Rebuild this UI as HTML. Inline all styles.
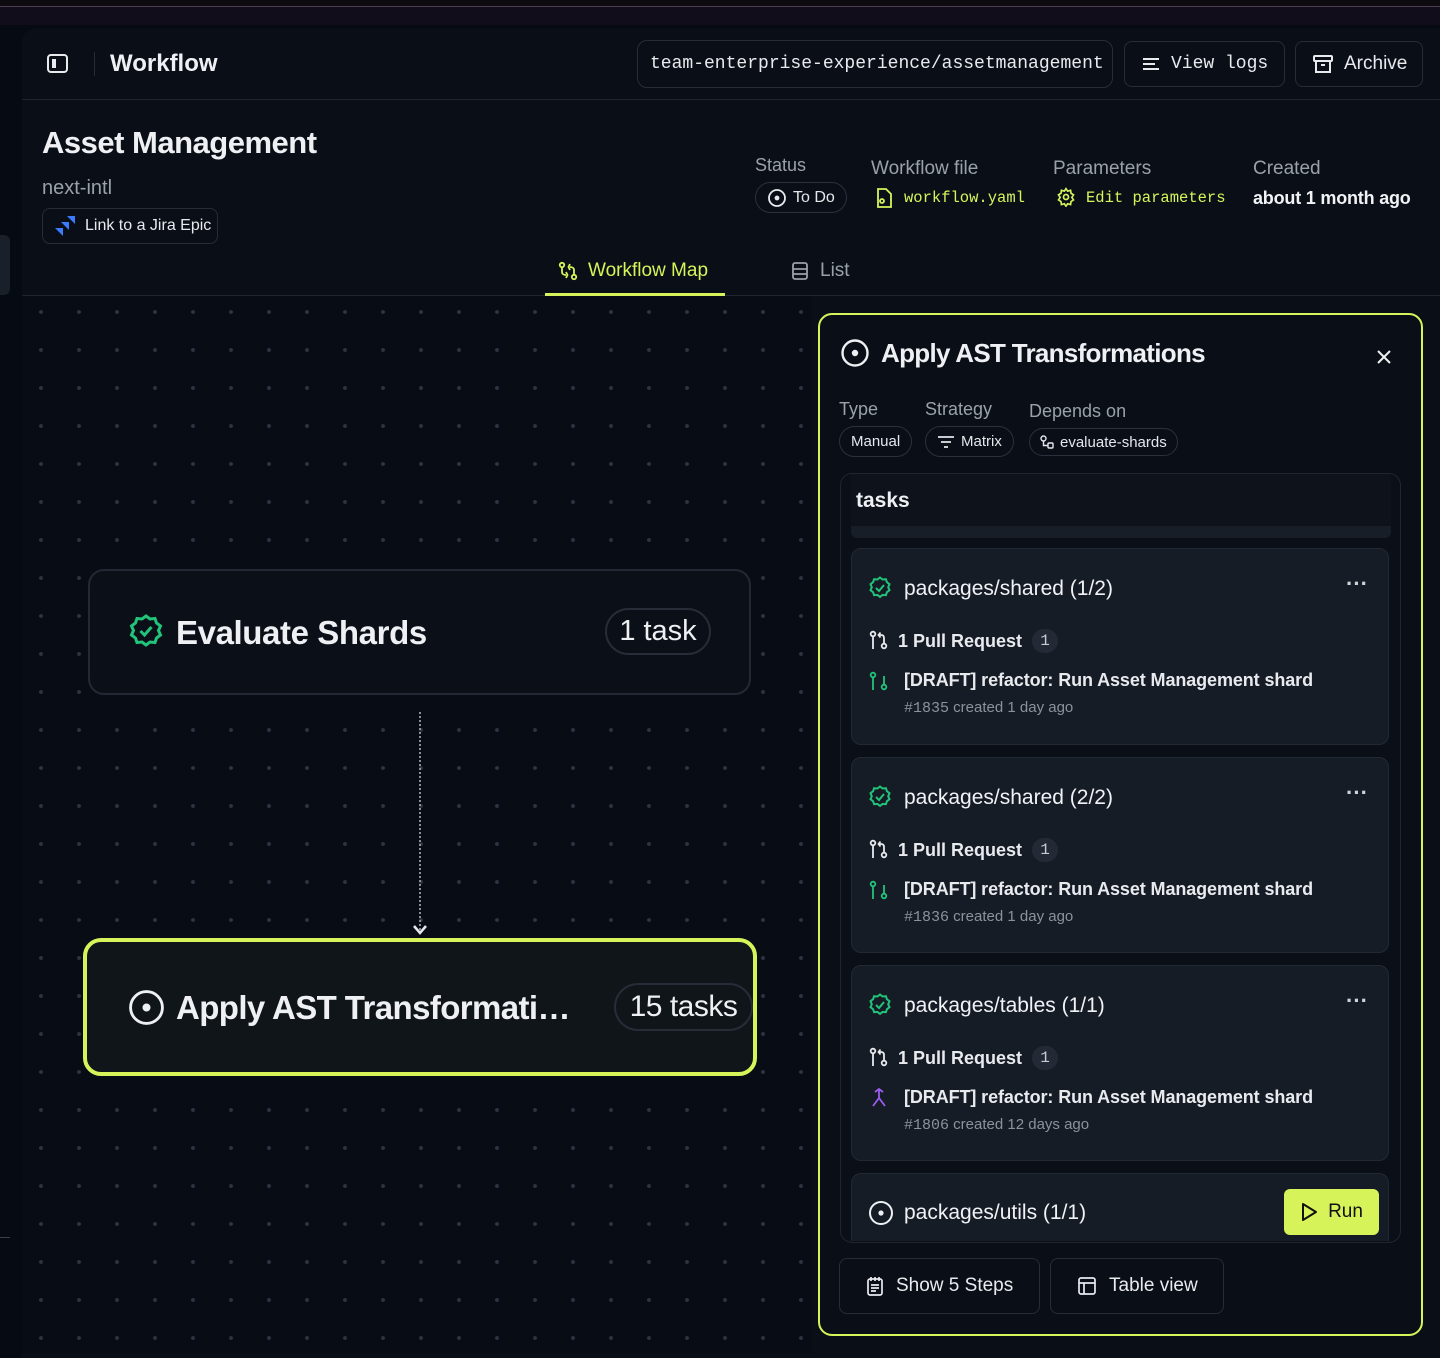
<!DOCTYPE html>
<html><head><meta charset="utf-8"><style>
*{box-sizing:border-box;margin:0;padding:0}
body{width:1440px;height:1353px;background:#060b13;font-family:"Liberation Sans",sans-serif;color:#eef0f3;position:relative;overflow:hidden}
.a{position:absolute}
.mono{font-family:"Liberation Mono",monospace}
.btn{position:absolute;border:1px solid #262d38;border-radius:8px;display:flex;align-items:center;gap:10px;color:#e8eaee}
.lbl{color:#9aa1ab;font-size:18px}
.pill{position:absolute;border:1px solid #2a313c;border-radius:16px;display:flex;align-items:center;gap:6px;font-size:15px;color:#e4e7eb;padding:0 10px}
.card{position:absolute;left:851px;width:538px;background:#161c25;border:1px solid #222935;border-radius:10px}
.ct{position:absolute;left:52px;top:28px;font-size:21px;color:#f0f2f5}
.pr{position:absolute;left:16px;top:80px;display:flex;align-items:center;gap:8px;font-size:18px;font-weight:bold;color:#e8eaee}
.badge{display:inline-block;background:#232a35;border-radius:12px;width:26px;height:24px;text-align:center;line-height:24px;font-family:"Liberation Mono",monospace;font-size:16px;font-weight:normal;color:#c8ccd2;margin-left:2px}
.prt{position:absolute;left:52px;top:121px;font-size:18px;font-weight:bold;color:#e8eaee;letter-spacing:-0.1px}
.prs{position:absolute;left:52px;top:150px;font-size:15px;color:#8b929c}
.dots{position:absolute;left:494px;top:22px;font-size:22px;font-weight:bold;color:#cfd3d8;letter-spacing:0px}
</style></head><body>
<div class="a" style="left:0;top:0;width:1440px;height:6px;background:#0d0a10"></div>
<div class="a" style="left:0;top:6px;width:1440px;height:1px;background:#4a3f52"></div>
<div class="a" style="left:0;top:7px;width:1440px;height:18px;background:#120d1a"></div>
<div class="a" style="left:0;top:235px;width:10px;height:60px;background:#1a2029;border-radius:0 6px 6px 0"></div>
<div class="a" style="left:0;top:1237px;width:10px;height:1px;background:#3a404a"></div>
<div class="a" style="left:22px;top:28px;width:1418px;height:1330px;background:#0a0f17;border-radius:14px 0 0 0"></div>
<div class="a" style="left:22px;top:296px;width:790px;height:1057px;background-color:#070c15;background-image:radial-gradient(circle,#2c3340 1.8px,transparent 2.2px);background-size:38px 38px;background-position:0px -3px"></div>
<div class="a" style="left:22px;top:99px;width:1418px;height:1px;background:#1d2530"></div>
<svg class="a" style="left:46px;top:52px" width="24" height="24" viewBox="0 0 24 24" fill="none" stroke="#e8eaee" stroke-width="2"><rect x="2" y="3" width="19" height="17" rx="3"/><rect x="6" y="7" width="4" height="9" fill="#e8eaee" stroke="none"/></svg>
<div class="a" style="left:94px;top:52px;width:1px;height:24px;background:#262d38"></div>
<div class="a" style="left:110px;top:50px;font-size:24px;font-weight:bold">Workflow</div>
<div class="btn mono" style="left:637px;top:40px;width:476px;height:48px;padding-left:12px;font-size:18px;border-radius:10px">team-enterprise-experience/assetmanagement</div>
<div class="btn mono" style="left:1124px;top:41px;width:161px;height:46px;padding-left:16px;font-size:18px"><svg width="20" height="20" viewBox="0 0 20 20" stroke="#e8eaee" stroke-width="2" fill="none"><path d="M2 5h16M2 10h12M2 15h16"/></svg>View logs</div>
<div class="btn" style="left:1295px;top:41px;width:128px;height:46px;padding-left:16px;font-size:19px"><svg width="22" height="22" viewBox="0 0 22 22" stroke="#e8eaee" stroke-width="2" fill="none"><rect x="2" y="3" width="18" height="5" rx="1"/><path d="M4 8v11h14V8M9 12h4"/></svg>Archive</div>
<div class="a" style="left:42px;top:125px;font-size:31px;font-weight:bold;letter-spacing:-0.5px">Asset Management</div>
<div class="a" style="left:42px;top:177px;font-size:20px;color:#9aa1ab">next-intl</div>
<div class="btn" style="left:42px;top:208px;width:176px;height:36px;padding-left:10px;font-size:16px;gap:8px"><svg width="24" height="24" viewBox="0 0 24 24"><path d="M14 2l8 0 0 8-8-8zM8 8l8 0 0 8zM2 14l8 0 0 8z" fill="#3b7bff"/></svg>Link to a Jira Epic</div>
<div class="a lbl" style="left:755px;top:155px">Status</div>
<div class="pill" style="left:755px;top:182px;height:31px;font-size:16px;gap:6px;padding:0 11px"><svg width="20" height="20" viewBox="0 0 20 20" fill="none" stroke="#e8eaee" stroke-width="1.8"><circle cx="10" cy="10" r="8"/><circle cx="10" cy="10" r="1.5" fill="#e8eaee"/></svg>To Do</div>
<div class="a lbl" style="left:871px;top:158px;font-size:19px">Workflow file</div>
<svg class="a" style="left:874px;top:187px" width="20" height="22" viewBox="0 0 20 22" fill="none" stroke="#d6f45a" stroke-width="1.8"><path d="M4 2h8l5 5v13H4z"/><circle cx="8" cy="14" r="2"/></svg>
<div class="a mono" style="left:904px;top:189px;font-size:15.5px;color:#d6f45a">workflow.yaml</div>
<div class="a lbl" style="left:1053px;top:158px;font-size:19px">Parameters</div>
<svg class="a" style="left:1056px;top:187px" width="20" height="20" viewBox="0 0 24 24" fill="none" stroke="#d6f45a" stroke-width="2"><circle cx="12" cy="12" r="3"/><path d="M12 2l2 3 3.5-1 .5 3.5 3 2-2 3 2 3-3 2-.5 3.5-3.5-1-2 3-2-3-3.5 1-.5-3.5-3-2 2-3-2-3 3-2 .5-3.5 3.5 1z"/></svg>
<div class="a mono" style="left:1086px;top:189px;font-size:15.5px;color:#d6f45a">Edit parameters</div>
<div class="a lbl" style="left:1253px;top:158px;font-size:19px">Created</div>
<div class="a" style="left:1253px;top:188px;font-size:18px;font-weight:bold;color:#f0f2f5;letter-spacing:-0.2px">about 1 month ago</div>
<div class="a" style="left:22px;top:295px;width:1418px;height:1px;background:#1d2530"></div>
<div class="a" style="left:545px;top:293px;width:180px;height:3px;background:#d6f45a"></div>
<svg class="a" style="left:558px;top:261px" width="20" height="20" viewBox="0 0 20 20" fill="none" stroke="#d6f45a" stroke-width="1.8"><circle cx="4" cy="4" r="2.2"/><circle cx="16" cy="16" r="2.2"/><path d="M4 6v5c0 2 2 3 4 3M16 14V9c0-2-2-3-4-3M12 3l-1.5 3 1.5 3M8 11l1.5 3L8 17"/></svg>
<div class="a" style="left:588px;top:260px;font-size:19px;color:#d6f45a">Workflow Map</div>
<svg class="a" style="left:790px;top:261px" width="20" height="20" viewBox="0 0 20 20" fill="none" stroke="#9aa1ab" stroke-width="1.8"><rect x="3" y="2" width="14" height="16" rx="2"/><path d="M3 8h14M3 13h14"/></svg>
<div class="a" style="left:820px;top:260px;font-size:19px;color:#9aa1ab">List</div>
<div class="a" style="left:88px;top:569px;width:663px;height:126px;background:#0b1018;border:2px solid #222935;border-radius:16px"></div>
<svg class="a" style="left:128px;top:613px" width="36" height="36" viewBox="0 0 36 36" fill="none" stroke="#21c47a" stroke-width="3"><path d="M18 3l4 3 5-.5 1.5 4.5 4 3-2 4.5 2 4.5-4 3-1.5 4.5-5-.5-4 3-4-3-5 .5-1.5-4.5-4-3 2-4.5-2-4.5 4-3L9 5.5l5 .5z"/><path d="M12.5 18l4 4 7-8"/></svg>
<div class="a" style="left:176px;top:614px;font-size:33px;font-weight:bold;letter-spacing:-0.4px">Evaluate Shards</div>
<div class="a" style="left:605px;top:608px;width:106px;height:47px;border:2px solid #262d38;border-radius:24px;font-size:29px;text-align:center;line-height:43px">1 task</div>
<div class="a" style="left:419px;top:712px;height:218px;border-left:2px dotted #8a9099"></div>
<svg class="a" style="left:411px;top:924px" width="18" height="12" viewBox="0 0 18 12" fill="none" stroke="#e8eaee" stroke-width="2.5"><path d="M3 2l6 7 6-7"/></svg>
<div class="a" style="left:83px;top:938px;width:674px;height:138px;background:#0f1519;border:4px solid #d6f45a;border-radius:18px"></div>
<svg class="a" style="left:128px;top:989px" width="37" height="37" viewBox="0 0 36 36" fill="none" stroke="#eef0f3" stroke-width="2.8"><circle cx="18" cy="18" r="15.5"/><circle cx="18" cy="18" r="2.5" fill="#eef0f3"/></svg>
<div class="a" style="left:176px;top:989px;font-size:33px;font-weight:bold;letter-spacing:-0.6px">Apply AST Transformati…</div>
<div class="a" style="left:614px;top:983px;width:139px;height:48px;border:2px solid #262d38;border-radius:24px;font-size:30px;text-align:center;line-height:44px;letter-spacing:-0.5px">15 tasks</div>
<div class="a" style="left:818px;top:313px;width:605px;height:1023px;background:#0a0f17;border:2px solid #d6f45a;border-radius:14px"></div>
<svg class="a" style="left:840px;top:338px" width="30" height="30" viewBox="0 0 30 30" fill="none" stroke="#eef0f3" stroke-width="2.4"><circle cx="15" cy="15" r="12.5"/><circle cx="15" cy="15" r="2" fill="#eef0f3"/></svg>
<div class="a" style="left:881px;top:338px;font-size:26px;font-weight:bold;letter-spacing:-0.7px">Apply AST Transformations</div>
<svg class="a" style="left:1376px;top:349px" width="16" height="16" viewBox="0 0 16 16" stroke="#eef0f3" stroke-width="2"><path d="M2 2l12 12M14 2L2 14"/></svg>
<div class="a lbl" style="left:839px;top:399px">Type</div>
<div class="a lbl" style="left:925px;top:399px">Strategy</div>
<div class="a lbl" style="left:1029px;top:401px">Depends on</div>
<div class="pill" style="left:839px;top:426px;height:31px;padding:0 11px">Manual</div>
<div class="pill" style="left:925px;top:426px;height:31px;padding:0 11px"><svg width="18" height="14" viewBox="0 0 18 14" stroke="#e4e7eb" stroke-width="1.8"><path d="M1 2h16M4 7h10M7 12h4"/></svg>Matrix</div>
<div class="pill" style="left:1029px;top:428px;height:28px;padding:0 10px"><svg width="14" height="14" viewBox="0 0 14 14" fill="none" stroke="#e4e7eb" stroke-width="1.4"><rect x="1" y="1" width="5" height="5" rx="2.5"/><rect x="8" y="8" width="5" height="5" rx="1"/><path d="M3.5 6v4.5H8"/></svg>evaluate-shards</div>
<div class="a" style="left:840px;top:473px;width:561px;height:770px;border:1px solid #1f2630;border-radius:12px;background:#0b1018;overflow:hidden">
<div class="a" style="left:10px;top:0;width:540px;height:52px;background:#0e131b"></div>
<div class="a" style="left:10px;top:52px;width:540px;height:12px;background:#181e28;border-radius:0 0 6px 6px"></div>
</div>
<div class="a" style="left:856px;top:489px;font-size:21px;font-weight:bold">tasks</div>
<svg width="0" height="0" style="position:absolute"><defs>
<g id="chk" fill="none" stroke="#21c47a" stroke-width="2"><path d="M12 1.5l2.6 2 3.3-.3 1 3 2.6 2-1.3 3 1.3 3-2.6 2-1 3-3.3-.3-2.6 2-2.6-2-3.3.3-1-3-2.6-2 1.3-3-1.3-3 2.6-2 1-3 3.3.3z"/><path d="M8 12l3 3 5-6"/></g>
<g id="prw" fill="none" stroke="#e8eaee" stroke-width="1.8"><circle cx="4" cy="4" r="2.3"/><circle cx="15" cy="16" r="2.3"/><path d="M4 6.3V19M15 13.7V8c0-2-1-3-3-3H10M11.5 2.5L9.5 5l2 2.5"/></g>
<g id="prg" fill="none" stroke="#21c47a" stroke-width="1.8"><circle cx="4" cy="4" r="2.3"/><circle cx="15" cy="16" r="2.3"/><path d="M4 6.3V19M15 13.7V5"/></g>
</defs></svg>
<div class="card" style="top:548px;height:197px">
<svg class="a" style="left:16px;top:27px" width="24" height="24" viewBox="0 0 24 24"><use href="#chk"/></svg>
<div class="ct">packages/shared (1/2)</div><div class="dots">···</div>
<svg class="a" style="left:17px;top:81px" width="20" height="21"><use href="#prw"/></svg>
<div class="pr" style="left:46px">1 Pull Request <span class="badge">1</span></div>
<svg class="a" style="left:17px;top:122px" width="20" height="21"><use href="#prg"/></svg>
<div class="prt">[DRAFT] refactor: Run Asset Management shard</div>
<div class="prs"><span class="mono">#1835</span> created 1 day ago</div>
</div>
<div class="card" style="top:757px;height:196px">
<svg class="a" style="left:16px;top:27px" width="24" height="24" viewBox="0 0 24 24"><use href="#chk"/></svg>
<div class="ct">packages/shared (2/2)</div><div class="dots">···</div>
<svg class="a" style="left:17px;top:81px" width="20" height="21"><use href="#prw"/></svg>
<div class="pr" style="left:46px">1 Pull Request <span class="badge">1</span></div>
<svg class="a" style="left:17px;top:122px" width="20" height="21"><use href="#prg"/></svg>
<div class="prt">[DRAFT] refactor: Run Asset Management shard</div>
<div class="prs"><span class="mono">#1836</span> created 1 day ago</div>
</div>
<div class="card" style="top:965px;height:196px">
<svg class="a" style="left:16px;top:27px" width="24" height="24" viewBox="0 0 24 24"><use href="#chk"/></svg>
<div class="ct">packages/tables (1/1)</div><div class="dots">···</div>
<svg class="a" style="left:17px;top:81px" width="20" height="21"><use href="#prw"/></svg>
<div class="pr" style="left:46px">1 Pull Request <span class="badge">1</span></div>
<svg class="a" style="left:17px;top:121px" width="20" height="21" viewBox="0 0 20 21" fill="none" stroke="#9b5cf0" stroke-width="1.8"><path d="M10 2v9M6 5l4-3 4 3M10 11l-6 8M10 11l6 8"/></svg>
<div class="prt">[DRAFT] refactor: Run Asset Management shard</div>
<div class="prs"><span class="mono">#1806</span> created 12 days ago</div>
</div>
<div class="card" style="top:1173px;height:68px;border-bottom:none;border-radius:10px 10px 0 0">
<svg class="a" style="left:16px;top:26px" width="26" height="26" viewBox="0 0 26 26" fill="none" stroke="#eef0f3" stroke-width="2"><circle cx="13" cy="13" r="11"/><circle cx="13" cy="13" r="1.6" fill="#eef0f3"/></svg>
<div class="ct" style="top:27px">packages/utils (1/1)</div>
<div class="a" style="left:432px;top:15px;width:95px;height:46px;background:#d6f45a;border-radius:6px;display:flex;align-items:center;justify-content:center;gap:10px;color:#111;font-size:19px"><svg width="18" height="20" viewBox="0 0 18 20" fill="none" stroke="#111" stroke-width="2"><path d="M3 2l13 8-13 8z" stroke-linejoin="round"/></svg>Run</div>
</div>
<div class="btn" style="left:839px;top:1258px;width:201px;height:56px;padding-left:26px;font-size:19px;gap:12px;border-radius:8px"><svg width="18" height="20" viewBox="0 0 18 20" fill="none" stroke="#e8eaee" stroke-width="1.7"><rect x="2" y="3" width="14" height="16" rx="2"/><path d="M5 1v4M9 1v4M13 1v4M5 9h8M5 12h8M5 15h5"/></svg>Show 5 Steps</div>
<div class="btn" style="left:1050px;top:1258px;width:174px;height:56px;padding-left:26px;font-size:19px;gap:12px;border-radius:8px"><svg width="20" height="20" viewBox="0 0 20 20" fill="none" stroke="#e8eaee" stroke-width="1.7"><rect x="2" y="2" width="16" height="16" rx="2"/><path d="M2 7h16M7 7v11"/></svg>Table view</div>
</body></html>
